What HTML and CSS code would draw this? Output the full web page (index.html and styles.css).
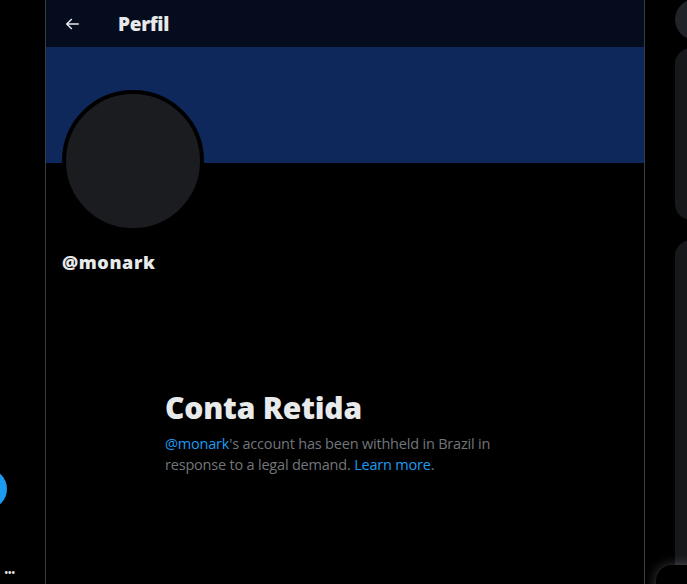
FILE: index.html
```html
<!DOCTYPE html>
<html lang="pt">
<head>
  <meta charset="UTF-8">
  <title>Perfil</title>
  <link rel="stylesheet" href="styles.css">
</head>
<body>
  <div class="app">
    <div class="menu">
      <div class="botao-post"></div>
      <div class="mais">&bull;&bull;&bull;</div>
    </div>

    <main class="principal">
      <div class="topo">
        <svg class="voltar" viewBox="0 0 24 24" width="18" height="18">
          <path d="M7.414 13l5.043 5.04-1.414 1.42L3.586 12l7.457-7.46 1.414 1.42L7.414 11H21v2H7.414z" fill="#e7e9ea"/>
        </svg>
        <h1>Perfil</h1>
      </div>
      <div class="capa"></div>
      <div class="perfil">
        <div class="avatar"></div>
        <div class="usuario">@monark</div>
      </div>
      <div class="retida">
        <h2>Conta Retida</h2>
        <p><a href="#">@monark</a>'s account has been withheld in Brazil in response to a legal demand. <a href="#">Learn more</a>.</p>
      </div>
    </main>

    <aside class="lateral">
      <div class="busca"></div>
      <div class="cartao"></div>
      <div class="cartao grande"></div>
    </aside>
  </div>
  <div class="gaveta"></div>
</body>
</html>
```

FILE: styles.css
```css
body {
  margin: 0;
  background: #000;
  font-family: "Open Sans", "Noto Sans", sans-serif;
  color: #e7e9ea;
  height: 584px;
  overflow: hidden;
}
.app {
  display: flex;
  height: 584px;
}
.menu {
  width: 45px;
  flex-shrink: 0;
  position: relative;
}
.botao-post {
  position: absolute;
  left: -33px;
  top: 469px;
  width: 40px;
  height: 40px;
  border-radius: 50%;
  background: #1d9bf0;
}
.mais {
  position: absolute;
  left: 4px;
  top: 564px;
  font-size: 12px;
  letter-spacing: -1px;
  color: #e7e9ea;
}
.principal {
  width: 598px;
  flex-shrink: 0;
  border-left: 1px solid #3a3d40;
  border-right: 1px solid #3a3d40;
}
.topo {
  height: 47px;
  background: #040c1e;
  display: flex;
  align-items: center;
  padding-left: 17px;
}
.voltar {
  margin-right: 37px;
}
.topo h1 {
  margin: 0;
  font-size: 19px;
  font-weight: 800;
  letter-spacing: -0.3px;
}
.capa {
  height: 116px;
  background: #0f285c;
}
.perfil {
  padding: 0 16px;
}
.avatar {
  width: 134px;
  height: 134px;
  margin-top: -73px;
  border: 4px solid #000;
  border-radius: 50%;
  background: #1b1c1f;
}
.usuario {
  margin-top: 18px;
  font-size: 18px;
  font-weight: 800;
  letter-spacing: 0.6px;
}
.retida {
  margin: 116px 0 0 119px;
  width: 340px;
}
.retida h2 {
  margin: 0;
  font-size: 30px;
  font-weight: 800;
  letter-spacing: -0.2px;
  line-height: 36px;
}
.retida p {
  margin: 7px 0 0;
  font-size: 14.5px;
  line-height: 21px;
  color: #71767b;
  letter-spacing: -0.2px;
}
.retida a {
  color: #1d9bf0;
  text-decoration: none;
}
.lateral {
  flex: 1;
  padding-left: 30px;
  overflow: hidden;
}
.busca {
  width: 60px;
  height: 41px;
  margin-top: -1px;
  border-radius: 21px;
  background: #202327;
}
.cartao {
  width: 60px;
  height: 172px;
  margin-top: 8px;
  border-radius: 16px;
  background: #16181c;
}
.cartao.grande {
  height: 400px;
  margin-top: 20px;
}
.gaveta {
  position: absolute;
  left: 656px;
  top: 565px;
  width: 60px;
  height: 40px;
  border-radius: 16px 0 0 0;
  background: #000;
  box-shadow: 0 0 12px rgba(255, 255, 255, 0.25);
}
```
